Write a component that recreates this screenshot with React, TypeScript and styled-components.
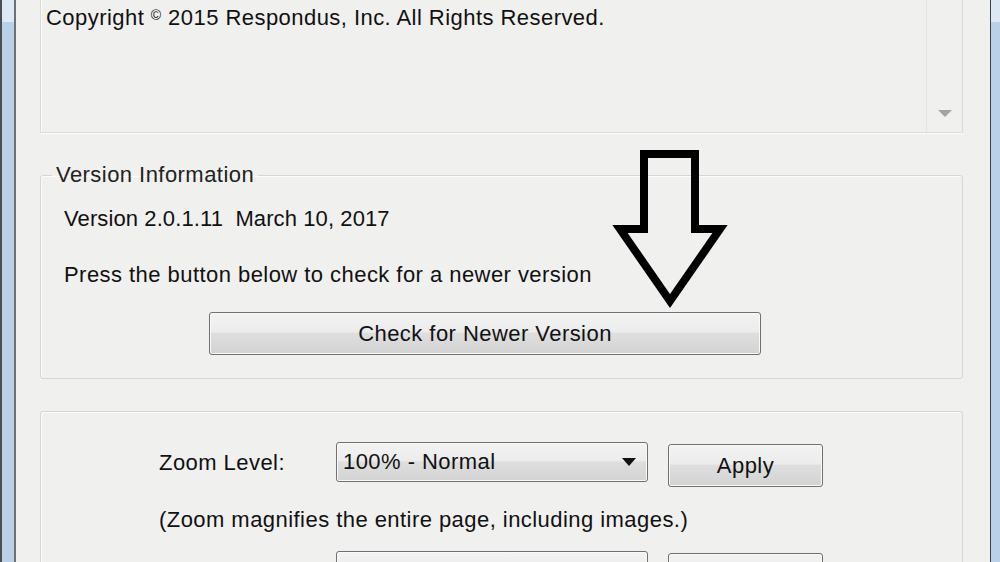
import React from "react";
import styled, { createGlobalStyle } from "styled-components";

const Global = createGlobalStyle`
  html, body { margin: 0; padding: 0; background: #f0f0ef; overflow: hidden; }
  * { box-sizing: border-box; }
`;

const Page = styled.div`
  position: relative;
  display: flex;
  width: 1000px;
  height: 562px;
  overflow: hidden;
  font-family: "Liberation Sans", Arial, sans-serif;
  color: #111;
  letter-spacing: 0.45px;
`;

const Frame = styled.div<{ $side: "left" | "right" }>`
  flex: none;
  width: ${(p) => (p.$side === "left" ? "16px" : "10px")};
  background: linear-gradient(#dce8f4 0 22px, #b8d0e8 22px);
  border-left: ${(p) => (p.$side === "left" ? "2px solid #4a4f55" : "1px solid #3c4046")};
  border-right: ${(p) => (p.$side === "left" ? "2px solid #6b7178" : "none")};
`;

const Dialog = styled.div`
  flex: 1;
  display: flex;
  flex-direction: column;
  padding: 0 27px 0 24px;
  background: #f0f0ef;
`;

const TextPanel = styled.div`
  flex: none;
  height: 133px;
  display: flex;
  border: 1px solid #dadad8;
  border-top: none;
  box-shadow: inset 1px 0 #fbfbfb, 0 1px #fdfdfd;
`;

const PanelText = styled.div`
  flex: 1;
  padding: 2px 0 0 5px;
  font-size: 22px;
  line-height: 26px;
`;

const Copy = styled.span`
  font-size: 14px;
  vertical-align: 5px;
`;

const ScrollStrip = styled.div`
  flex: none;
  width: 36px;
  border-left: 1px solid #e3e3e1;
  display: flex;
  align-items: flex-end;
  justify-content: center;
  padding-bottom: 15px;
`;

const DownTri = styled.div<{ $color: string; $w: number; $h: number }>`
  width: 0;
  height: 0;
  border-left: ${(p) => p.$w / 2}px solid transparent;
  border-right: ${(p) => p.$w / 2}px solid transparent;
  border-top: ${(p) => p.$h}px solid ${(p) => p.$color};
`;

const Group = styled.fieldset<{ $top: number }>`
  margin: ${(p) => p.$top}px 0 0 0;
  padding: 18px 23px 23px 23px;
  border: 1px solid #d6d6d4;
  border-radius: 3px;
  box-shadow: inset 1px 1px #fcfcfc;
  min-width: 0;
`;

const Legend = styled.legend`
  margin-left: -12px;
  padding: 0 4px 0 4px;
  font-size: 22px;
  line-height: 26px;
  color: #222;
`;

const Line = styled.div<{ $mt?: number; $ls?: number }>`
  font-size: 22px;
  line-height: 26px;
  margin-top: ${(p) => p.$mt ?? 0}px;
  letter-spacing: ${(p) => p.$ls ?? 0.45}px;
  white-space: pre;
`;

const WinButton = styled.button<{ $w: number; $h: number; $ml?: number; $mt?: number }>`
  display: block;
  flex: none;
  width: ${(p) => p.$w}px;
  height: ${(p) => p.$h}px;
  margin: ${(p) => p.$mt ?? 0}px 0 0 ${(p) => p.$ml ?? 0}px;
  padding: 0;
  border: 1px solid #707070;
  border-radius: 3px;
  background: linear-gradient(#f3f3f3 0%, #ececec 46%, #dedede 50%, #d3d3d3 100%);
  box-shadow: inset 0 0 0 1px #fafafa;
  font-family: "Liberation Sans", Arial, sans-serif;
  font-size: 22px;
  letter-spacing: 0.45px;
  color: #111;
  text-align: center;
  line-height: ${(p) => p.$h - 4}px;
`;

const SettingsBox = styled.div`
  margin-top: 32px;
  flex: 1;
  border: 1px solid #d6d6d4;
  border-bottom: none;
  border-radius: 3px 3px 0 0;
  box-shadow: inset 1px 1px #fcfcfc;
  padding: 30px 0 0 118px;
`;

const Row = styled.div<{ $mt?: number }>`
  display: flex;
  align-items: flex-start;
  margin-top: ${(p) => p.$mt ?? 0}px;
`;

const RowLabel = styled.div`
  flex: none;
  width: 177px;
  font-size: 22px;
  line-height: 26px;
  padding-top: 8px;
`;

const Select = styled.div`
  flex: none;
  width: 312px;
  height: 40px;
  display: flex;
  align-items: center;
  justify-content: space-between;
  padding: 0 11px 0 6px;
  border: 1px solid #707070;
  border-radius: 3px;
  background: linear-gradient(#f3f3f3 0%, #ececec 46%, #dedede 50%, #d3d3d3 100%);
  box-shadow: inset 0 0 0 1px #fafafa;
  font-size: 22px;
  margin-right: 20px;
`;

const Hint = styled.div`
  font-size: 22px;
  line-height: 26px;
  margin-top: 20px;
`;

const ArrowSvg = styled.svg`
  position: absolute;
  left: 0;
  top: 0;
  pointer-events: none;
`;

export default function App() {
  return (
    <>
      <Global />
      <Page>
        <Frame $side="left" />
        <Dialog>
          <TextPanel>
            <PanelText>
              Copyright <Copy>©</Copy> 2015 Respondus, Inc. All Rights Reserved.
            </PanelText>
            <ScrollStrip>
              <DownTri $color="#a3a3a3" $w={14} $h={7} />
            </ScrollStrip>
          </TextPanel>

          <Group $top={29}>
            <Legend>Version Information</Legend>
            <Line $ls={0.1}>{"Version 2.0.1.11  March 10, 2017"}</Line>
            <Line $mt={30}>Press the button below to check for a newer version</Line>
            <WinButton $w={552} $h={43} $ml={145} $mt={24}>
              Check for Newer Version
            </WinButton>
          </Group>

          <SettingsBox>
            <Row>
              <RowLabel>Zoom Level:</RowLabel>
              <Select>
                <span>100% - Normal</span>
                <DownTri $color="#111" $w={14} $h={8} />
              </Select>
              <WinButton $w={155} $h={43} $mt={2}>
                Apply
              </WinButton>
            </Row>
            <Hint>(Zoom magnifies the entire page, including images.)</Hint>
            <Row $mt={18}>
              <RowLabel>Language:</RowLabel>
              <Select>
                <span>English (United States)</span>
                <DownTri $color="#111" $w={14} $h={8} />
              </Select>
              <WinButton $w={155} $h={43} $mt={2}>
                Apply
              </WinButton>
            </Row>
          </SettingsBox>
        </Dialog>
        <Frame $side="right" />
        <ArrowSvg width={1000} height={562} viewBox="0 0 1000 562">
          <polygon
            points="644,154 695,154 695,229 720,229 670,301 620,229 644,229"
            fill="none"
            stroke="#000"
            strokeWidth={8}
            strokeLinejoin="miter"
          />
        </ArrowSvg>
      </Page>
    </>
  );
}
